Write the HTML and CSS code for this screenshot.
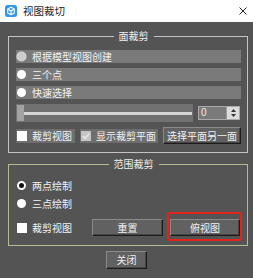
FILE: index.html
```html
<!DOCTYPE html>
<html lang="zh">
<head>
<meta charset="utf-8">
<title>视图裁切</title>
<link rel="stylesheet" href="styles.css">
</head>
<body>
<div class="titlebar">
  <svg class="app-icon" viewBox="0 0 12 12" width="12" height="12">
    <rect x="0" y="0" width="12" height="12" rx="2.5" fill="#3497ea"/>
    <path d="M6 2.3 L9.3 4.1 V7.9 L6 9.7 L2.7 7.9 V4.1 Z M2.7 4.1 L6 5.9 L9.3 4.1 M6 5.9 V9.7" fill="none" stroke="#fff" stroke-width="1.1" stroke-linejoin="round"/>
  </svg>
  <span class="title">视图裁切</span>
  <svg class="close-x" viewBox="0 0 8 8" width="8" height="8">
    <path d="M0.5 0.5 L7.5 7.5 M7.5 0.5 L0.5 7.5" stroke="#2a2a2a" stroke-width="1"/>
  </svg>
</div>

<div class="content">
  <section class="group g1">
    <div class="legend-wrap"><span class="legend">面裁剪</span></div>
    <div class="opt"><span class="radio dim"></span>根据模型视图创建</div>
    <div class="opt"><span class="radio"></span>三个点</div>
    <div class="opt"><span class="radio"></span>快速选择</div>
    <div class="slider-row">
      <div class="slider">
        <div class="track"></div>
        <div class="handle"></div>
      </div>
      <div class="spin">
        <span class="spin-val">0</span>
        <span class="spin-arrows">
          <svg viewBox="0 0 5 3" width="5" height="3"><path d="M0 3 L2.5 0 L5 3 Z" fill="#333"/></svg>
          <svg viewBox="0 0 5 3" width="5" height="3"><path d="M0 0 L2.5 3 L5 0 Z" fill="#333"/></svg>
        </span>
      </div>
    </div>
    <div class="check-row">
      <label class="chk bg w1"><span class="box"></span>裁剪视图</label>
      <label class="chk bg w2"><span class="box checked">
        <svg viewBox="0 0 10 10" width="10" height="10"><path d="M2 5.2 L4.2 7.4 L8.2 2.6" fill="none" stroke="#eeeeee" stroke-width="1.3"/></svg>
      </span>显示裁剪平面</label>
      <button class="btn wide">选择平面另一面</button>
    </div>
  </section>

  <section class="group g2">
    <div class="legend-wrap"><span class="legend">范围裁剪</span></div>
    <div class="opt plain"><span class="radio on"></span>两点绘制</div>
    <div class="opt plain"><span class="radio"></span>三点绘制</div>
    <div class="action-row">
      <label class="chk w3"><span class="box"></span>裁剪视图</label>
      <button class="btn b-reset">重置</button>
      <span class="highlight"><button class="btn b-top">俯视图</button></span>
    </div>
  </section>

  <div class="footer">
    <button class="btn b-close">关闭</button>
  </div>
</div>
</body>
</html>
```

FILE: styles.css
```css
* { box-sizing: border-box; }
html, body { margin: 0; padding: 0; }
body {
  width: 253px;
  height: 278px;
  overflow: hidden;
  background: #545454;
  font-family: "Noto Sans CJK SC", "Noto Sans", sans-serif;
  font-size: 10px;
  line-height: 12px;
  color: #f2f2f2;
}

.titlebar {
  height: 22px;
  background: #ffffff;
  display: flex;
  align-items: center;
  padding: 0 5px 0 5px;
  color: #1e1e1e;
}
.app-icon { margin-right: 6px; flex: none; }
.title { flex: 1; font-size: 10.5px; }
.close-x { flex: none; margin-right: 1px; }

.content { padding-top: 14px; }

.group {
  margin: 0 5px 0 8px;
  border: 1px solid #c4c4c4;
  padding: 0 6px 8px 7px;
  display: flex;
  flex-direction: column;
  gap: 5px;
}
.g2 {
  margin-top: 11px;
  border-color: #b9b993;
  padding-bottom: 9px;
}

.legend-wrap {
  display: flex;
  justify-content: center;
  padding-left: 10px;
  margin-top: -7px;
  margin-bottom: 3px;
}
.g2 .legend-wrap { margin-bottom: 4px; }
.legend {
  background: #545454;
  padding: 0 5px;
  line-height: 12px;
  color: #f0f0f0;
}

.opt {
  height: 13px;
  display: flex;
  align-items: center;
  background: #7a7a7a;
  padding-left: 1px;
  white-space: nowrap;
}
.opt.plain { background: transparent; }

.radio {
  width: 9px;
  height: 9px;
  border-radius: 50%;
  background: #ffffff;
  margin-right: 6px;
  flex: none;
}
.radio.dim { background: #cdcdcd; box-shadow: 0 0 0 0.5px #e6e6e6; }
.radio.on { background: #111; border: 2px solid #fff; }

.slider-row {
  height: 18px;
  display: flex;
  align-items: center;
  gap: 5px;
}
.slider {
  width: 177px;
  height: 18px;
  background: #717171;
  display: grid;
  align-items: center;
  padding: 1px 1px;
}
.slider > * { grid-area: 1 / 1; }
.track {
  height: 3px;
  background: #d6d6d6;
  margin-left: 6px;
}
.handle {
  width: 7px;
  height: 16px;
  background: #a3a3a3;
  margin-left: 0;
}

.spin {
  width: 42px;
  height: 14px;
  display: flex;
  border: 1px solid #a9a9a9;
  background: #7a7a7a;
}
.spin-val {
  flex: 1;
  padding-left: 2px;
  line-height: 12px;
  font-family: "Liberation Sans", sans-serif;
  font-size: 10px;
  color: #e8e8e8;
}
.spin-arrows {
  width: 13px;
  background: #dcdcdc;
  display: flex;
  flex-direction: column;
  align-items: center;
  justify-content: space-evenly;
  border-left: 1px solid #9a9a9a;
}
.spin-arrows svg { display: block; }

.check-row {
  height: 17px;
  display: flex;
  align-items: center;
  gap: 5px;
}
.chk {
  height: 14px;
  display: flex;
  align-items: center;
  white-space: nowrap;
}
.chk.bg { background: #6e6e6e; padding-left: 1px; }
.w1 { width: 59px; }
.w2 { width: 78px; }
.w3 { width: 69px; padding-left: 1px; }
.box {
  width: 10px;
  height: 10px;
  background: #ffffff;
  margin-right: 5px;
  flex: none;
}
.box.checked { background: #c4c4c4; }
.box svg { display: block; }

.btn {
  font: inherit;
  color: #f0f0f0;
  background: #616161;
  border: 1px solid;
  border-color: #8a8a8a #1c1c1c #1c1c1c #8a8a8a;
  box-shadow: inset -1px -1px 0 #444;
  padding: 0;
  height: 17px;
  line-height: 14px;
  white-space: nowrap;
}
.btn.wide { flex: 1; }

.action-row {
  height: 17px;
  margin-top: 4px;
  display: flex;
  align-items: center;
  gap: 7px;
}
.b-reset { width: 71px; }
.highlight { position: relative; display: flex; }
.b-top { width: 70px; }
.highlight::after {
  content: "";
  position: absolute;
  inset: -7px -2px -5px -3px;
  border: 2px solid #e3231c;
  border-radius: 3px;
}

.footer {
  display: flex;
  justify-content: center;
  padding-top: 5px;
}
.b-close { width: 41px; height: 18px; }
```
